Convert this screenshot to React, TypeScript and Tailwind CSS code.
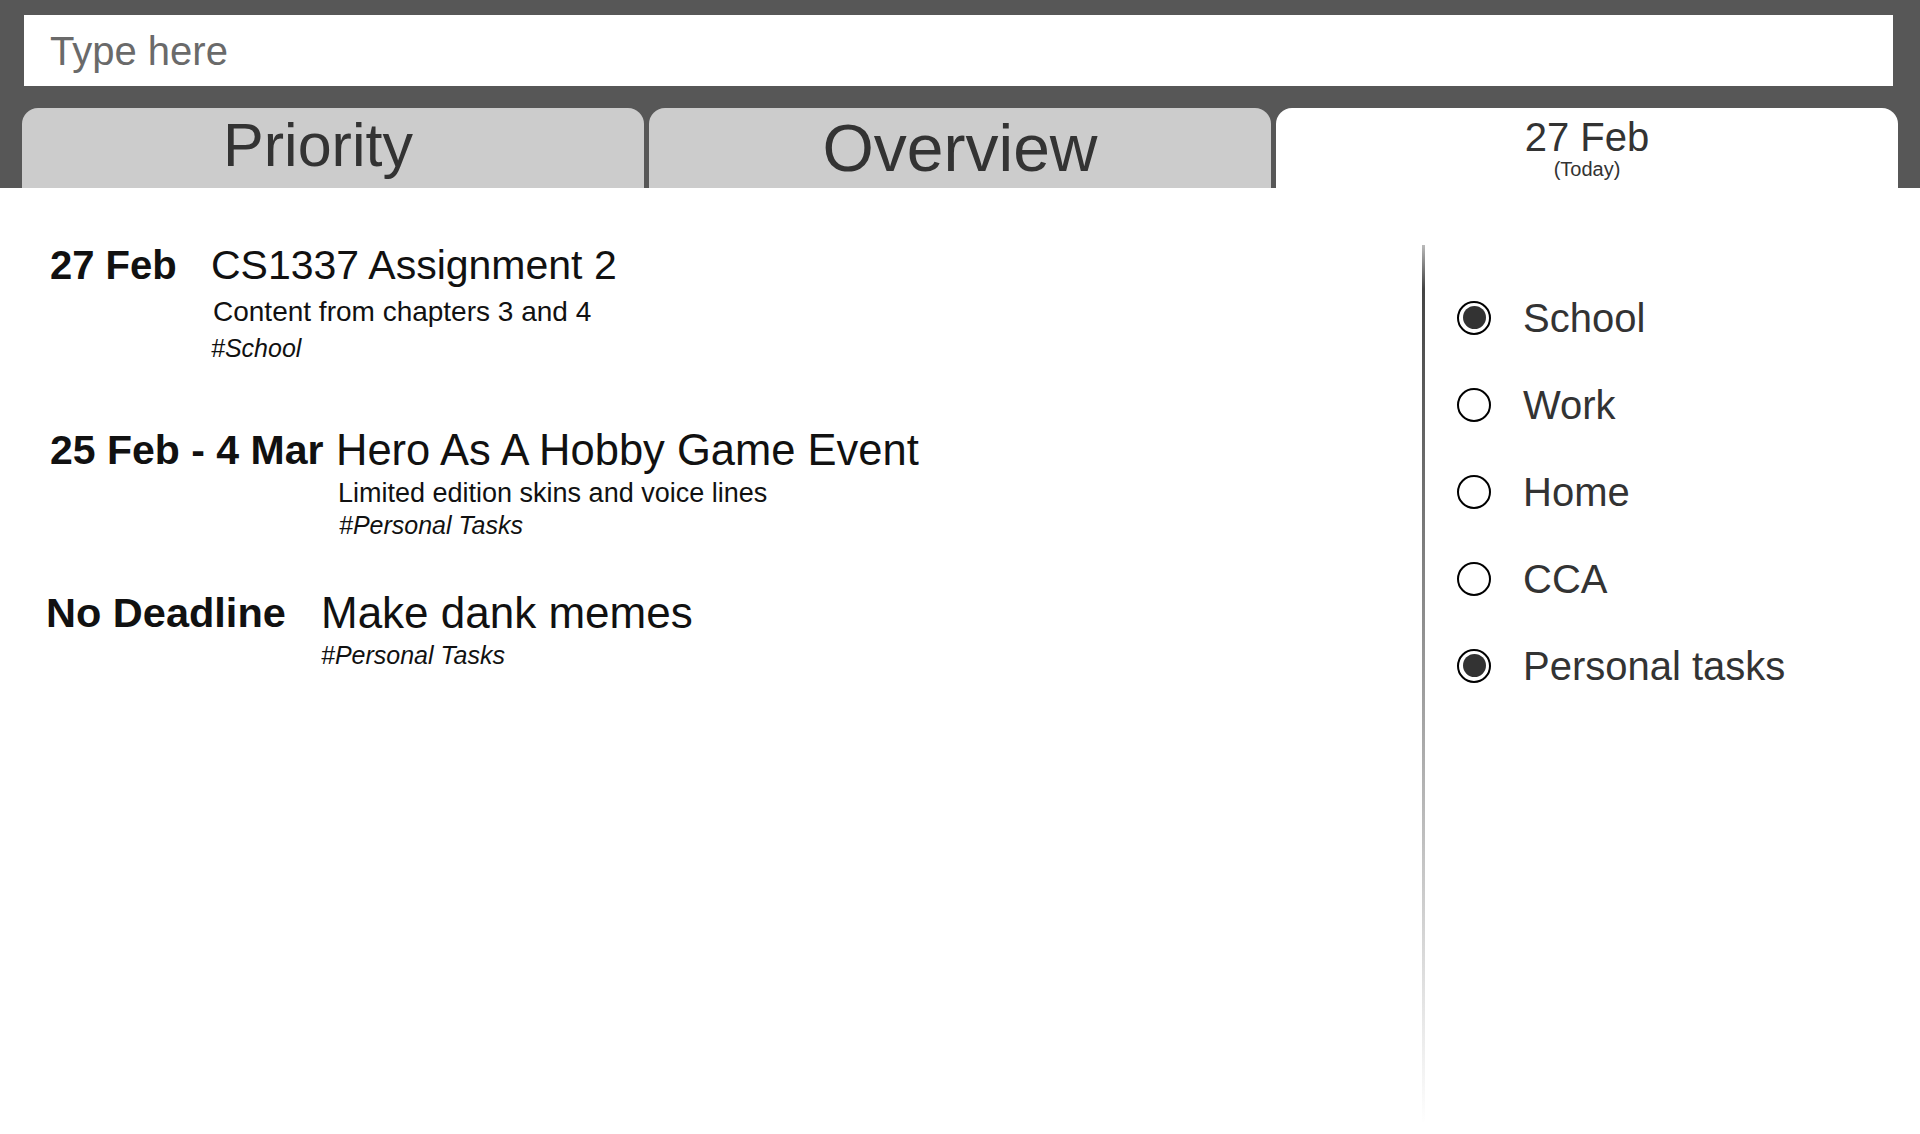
import { useState } from "react";

const tasks = [
  {
    id: 1,
    date: "27 Feb",
    dateW: "w-[161px]",
    dateSize: "text-[40px]",
    shift: "ml-0",
    title: "CS1337 Assignment 2",
    titleSize: "text-[41px]",
    desc: "Content from chapters 3 and 4",
    descSize: "text-[28px]",
    tag: "#School",
    top: "mt-[53px]",
    lead: "leading-[37px]",
    descTop: "mt-[4px]",
    tagPad: "pl-0",
  },
  {
    id: 2,
    date: "25 Feb - 4 Mar",
    dateW: "w-[286px]",
    dateSize: "text-[41px]",
    shift: "ml-0",
    title: "Hero As A Hobby Game Event",
    titleSize: "text-[43.5px]",
    desc: "Limited edition skins and voice lines",
    descSize: "text-[27px]",
    tag: "#Personal Tasks",
    top: "mt-[59px]",
    lead: "leading-[32px]",
    descTop: "mt-[3px]",
    tagPad: "pl-[3px]",
  },
  {
    id: 3,
    date: "No Deadline",
    dateW: "w-[275px]",
    dateSize: "text-[41.5px]",
    shift: "-ml-[4px]",
    title: "Make dank memes",
    titleSize: "text-[44px]",
    desc: "",
    descSize: "text-[27px]",
    tag: "#Personal Tasks",
    top: "mt-[48px]",
    lead: "leading-[36px]",
    descTop: "mt-0",
    tagPad: "pl-0",
  },
];

const categories = [
  { id: 1, name: "School", on: true },
  { id: 2, name: "Work", on: false },
  { id: 3, name: "Home", on: false },
  { id: 4, name: "CCA", on: false },
  { id: 5, name: "Personal tasks", on: true },
];

function Radio({ on }: { on: boolean }) {
  return (
    <div className="w-[34px] h-[34px] rounded-full border-2 border-black flex items-center justify-center bg-white shrink-0">
      {on && <div className="w-[23px] h-[23px] rounded-full bg-[#333333]" />}
    </div>
  );
}

export default function App() {
  const [tab, setTab] = useState<number>(3);
  const [checked, setChecked] = useState(categories);

  return (
    <div
      className="w-[1920px] h-[1134px] bg-white flex flex-col overflow-hidden"
      style={{ fontFamily: '"Liberation Sans", Arial, sans-serif' }}
    >
      {/* top bar */}
      <div className="bg-[#575757] h-[188px] pt-[15px] shrink-0">
        <div className="ml-[24px] mr-[27px] h-[71px] bg-white flex items-center pl-[26px]">
          <input
            placeholder="Type here"
            className="w-full text-[40px] text-[#555] placeholder:text-[#6a6a6a] outline-none bg-transparent"
          />
        </div>

        <div className="flex gap-[5px] px-[22px] mt-[22px]">
          <button
            onClick={() => setTab(1)}
            className={`w-[622px] h-[80px] rounded-t-[16px] flex items-center justify-center pr-[30px] pb-[4px] text-[61px] text-[#333] ${tab === 1 ? "bg-white" : "bg-[#cccccc]"}`}
          >
            Priority
          </button>
          <button
            onClick={() => setTab(2)}
            className={`w-[622px] h-[80px] rounded-t-[16px] flex items-center justify-center text-[66px] text-[#333] ${tab === 2 ? "bg-white" : "bg-[#cccccc]"}`}
          >
            Overview
          </button>
          <button
            onClick={() => setTab(3)}
            className={`w-[622px] h-[80px] rounded-t-[16px] flex flex-col items-center pt-[8px] text-[#333] ${tab === 3 ? "bg-white" : "bg-[#cccccc]"}`}
          >
            <span className="text-[40px] leading-[42px]">27 Feb</span>
            <span className="text-[20px] leading-[22px]">(Today)</span>
          </button>
        </div>
      </div>

      <div className="flex flex-1">
        {/* task list */}
        <div className="w-[1422px] pl-[50px]">
          {tasks.map((t) => (
            <div key={t.id} className={`flex ${t.top} ${t.shift}`}>
              <div className={`${t.dateW} ${t.dateSize} shrink-0 font-bold leading-[48px] text-[#111]`}>{t.date}</div>
              <div className="flex flex-col text-[#111]">
                <p className={`${t.titleSize} leading-[48px]`}>{t.title}</p>
                {t.desc && <p className={`${t.descSize} ${t.lead} ${t.descTop} pl-[2px]`}>{t.desc}</p>}
                <p className={`text-[25px] italic ${t.lead} ${t.tagPad}`}>{t.tag}</p>
              </div>
            </div>
          ))}
        </div>

        {/* divider */}
        <div className="w-[3px] mt-[57px] h-[879px] shrink-0 bg-gradient-to-b from-[#bbbbbb] via-[#444444] via-5% to-transparent" />

        {/* filters */}
        <div className="flex-1 pl-[32px] pt-[112px] flex flex-col gap-[52px]">
          {checked.map((c) => (
            <label
              key={c.id}
              className="flex items-center gap-[32px] h-[35px] cursor-pointer"
              onClick={() =>
                setChecked(checked.map((x) => (x.id === c.id ? { ...x, on: !x.on } : x)))
              }
            >
              <Radio on={c.on} />
              <span className="text-[40px] text-[#333]">{c.name}</span>
            </label>
          ))}
        </div>
      </div>
    </div>
  );
}
